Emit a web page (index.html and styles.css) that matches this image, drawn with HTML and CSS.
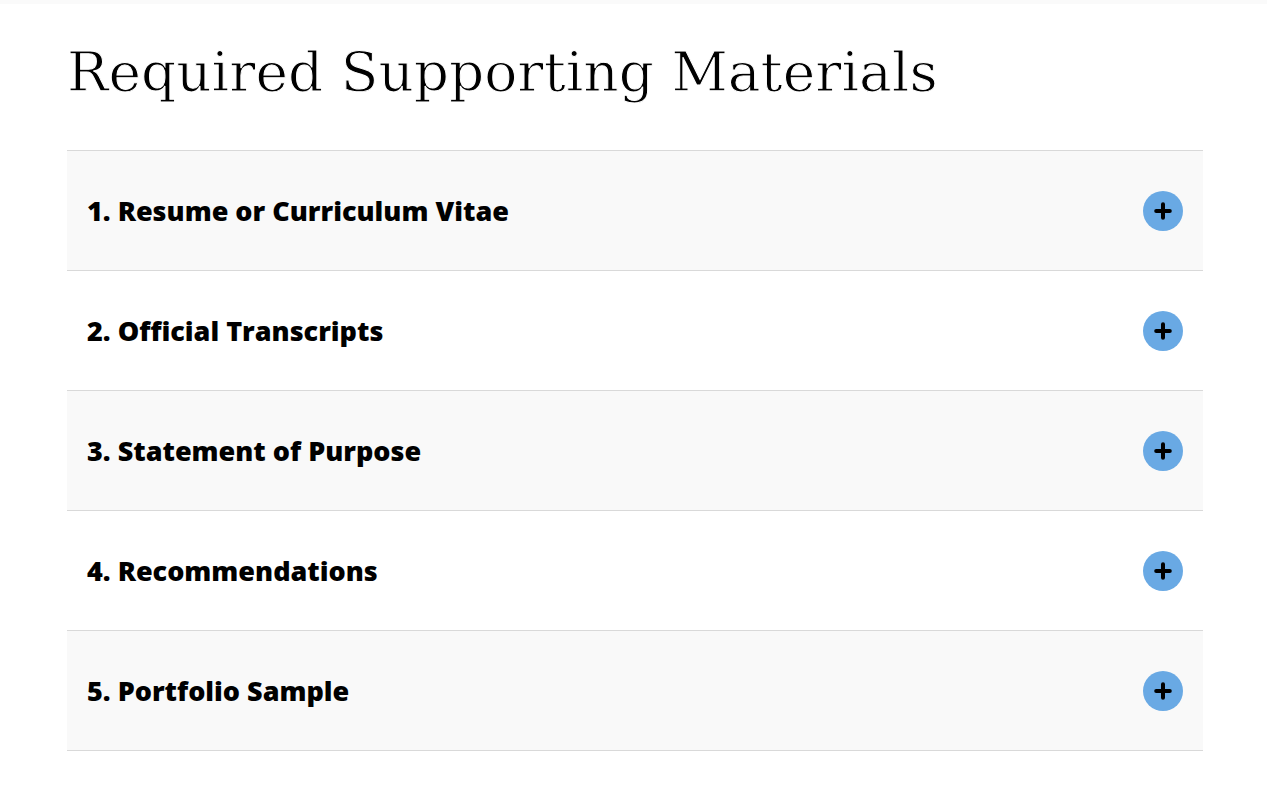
FILE: index.html
```html
<!DOCTYPE html>
<html lang="en">

<head>
    <meta charset="UTF-8">
    <meta name="viewport" content="width=device-width, initial-scale=1.0">
    <title>Required Supporting Materials</title>
    <link rel="stylesheet" href="styles.css">
</head>

<body>
    <main class="container">
        <h1>Required Supporting Materials</h1>
        <div class="accordion">
            <h2 class="item">
                <button class="toggle" type="button" aria-expanded="false">
                    <span>1. Resume or Curriculum Vitae</span>
                    <svg class="icon" viewBox="0 0 40 40" aria-hidden="true"><circle cx="20" cy="20" r="20"/><path d="M20 13.2v13.6M13.2 20h13.6"/></svg>
                </button>
            </h2>
            <h2 class="item">
                <button class="toggle" type="button" aria-expanded="false">
                    <span>2. Official Transcripts</span>
                    <svg class="icon" viewBox="0 0 40 40" aria-hidden="true"><circle cx="20" cy="20" r="20"/><path d="M20 13.2v13.6M13.2 20h13.6"/></svg>
                </button>
            </h2>
            <h2 class="item">
                <button class="toggle" type="button" aria-expanded="false">
                    <span>3. Statement of Purpose</span>
                    <svg class="icon" viewBox="0 0 40 40" aria-hidden="true"><circle cx="20" cy="20" r="20"/><path d="M20 13.2v13.6M13.2 20h13.6"/></svg>
                </button>
            </h2>
            <h2 class="item">
                <button class="toggle" type="button" aria-expanded="false">
                    <span>4. Recommendations</span>
                    <svg class="icon" viewBox="0 0 40 40" aria-hidden="true"><circle cx="20" cy="20" r="20"/><path d="M20 13.2v13.6M13.2 20h13.6"/></svg>
                </button>
            </h2>
            <h2 class="item">
                <button class="toggle" type="button" aria-expanded="false">
                    <span>5. Portfolio Sample</span>
                    <svg class="icon" viewBox="0 0 40 40" aria-hidden="true"><circle cx="20" cy="20" r="20"/><path d="M20 13.2v13.6M13.2 20h13.6"/></svg>
                </button>
            </h2>
        </div>
    </main>
</body>

</html>
```

FILE: styles.css
```css
* {
    box-sizing: border-box;
}

body {
    margin: 0;
    background: #fff;
    color: #000;
    font-family: "Open Sans", sans-serif;
    border-top: 4px solid #fafafa;
}

.container {
    padding: 28px 64px 48px 67px;
}

h1 {
    margin: 0 0 38px;
    font-family: "DejaVu Serif", serif;
    font-size: 55px;
    font-weight: 200;
    line-height: 80px;
    /* white outline thins the letters to a light weight */
    -webkit-text-stroke: 1px #fff;
}

.accordion {
    border-top: 1px solid #d9d9d9;
}

.item {
    margin: 0;
    border-bottom: 1px solid #d9d9d9;
}

.item:nth-child(odd) {
    background: #f9f9f9;
}

.toggle {
    display: flex;
    justify-content: space-between;
    align-items: center;
    width: 100%;
    min-height: 119px;
    padding: 0 20px;
    border: none;
    background: none;
    color: #000;
    font-family: "Open Sans", sans-serif;
    font-size: 27px;
    font-weight: 800;
    line-height: 38px;
    text-align: left;
    cursor: pointer;
}

.icon {
    flex: none;
    width: 40px;
    height: 40px;
}

.icon circle {
    fill: #69a9e4;
}

.icon path {
    fill: none;
    stroke: #000;
    stroke-width: 4;
    stroke-linecap: round;
}
```
